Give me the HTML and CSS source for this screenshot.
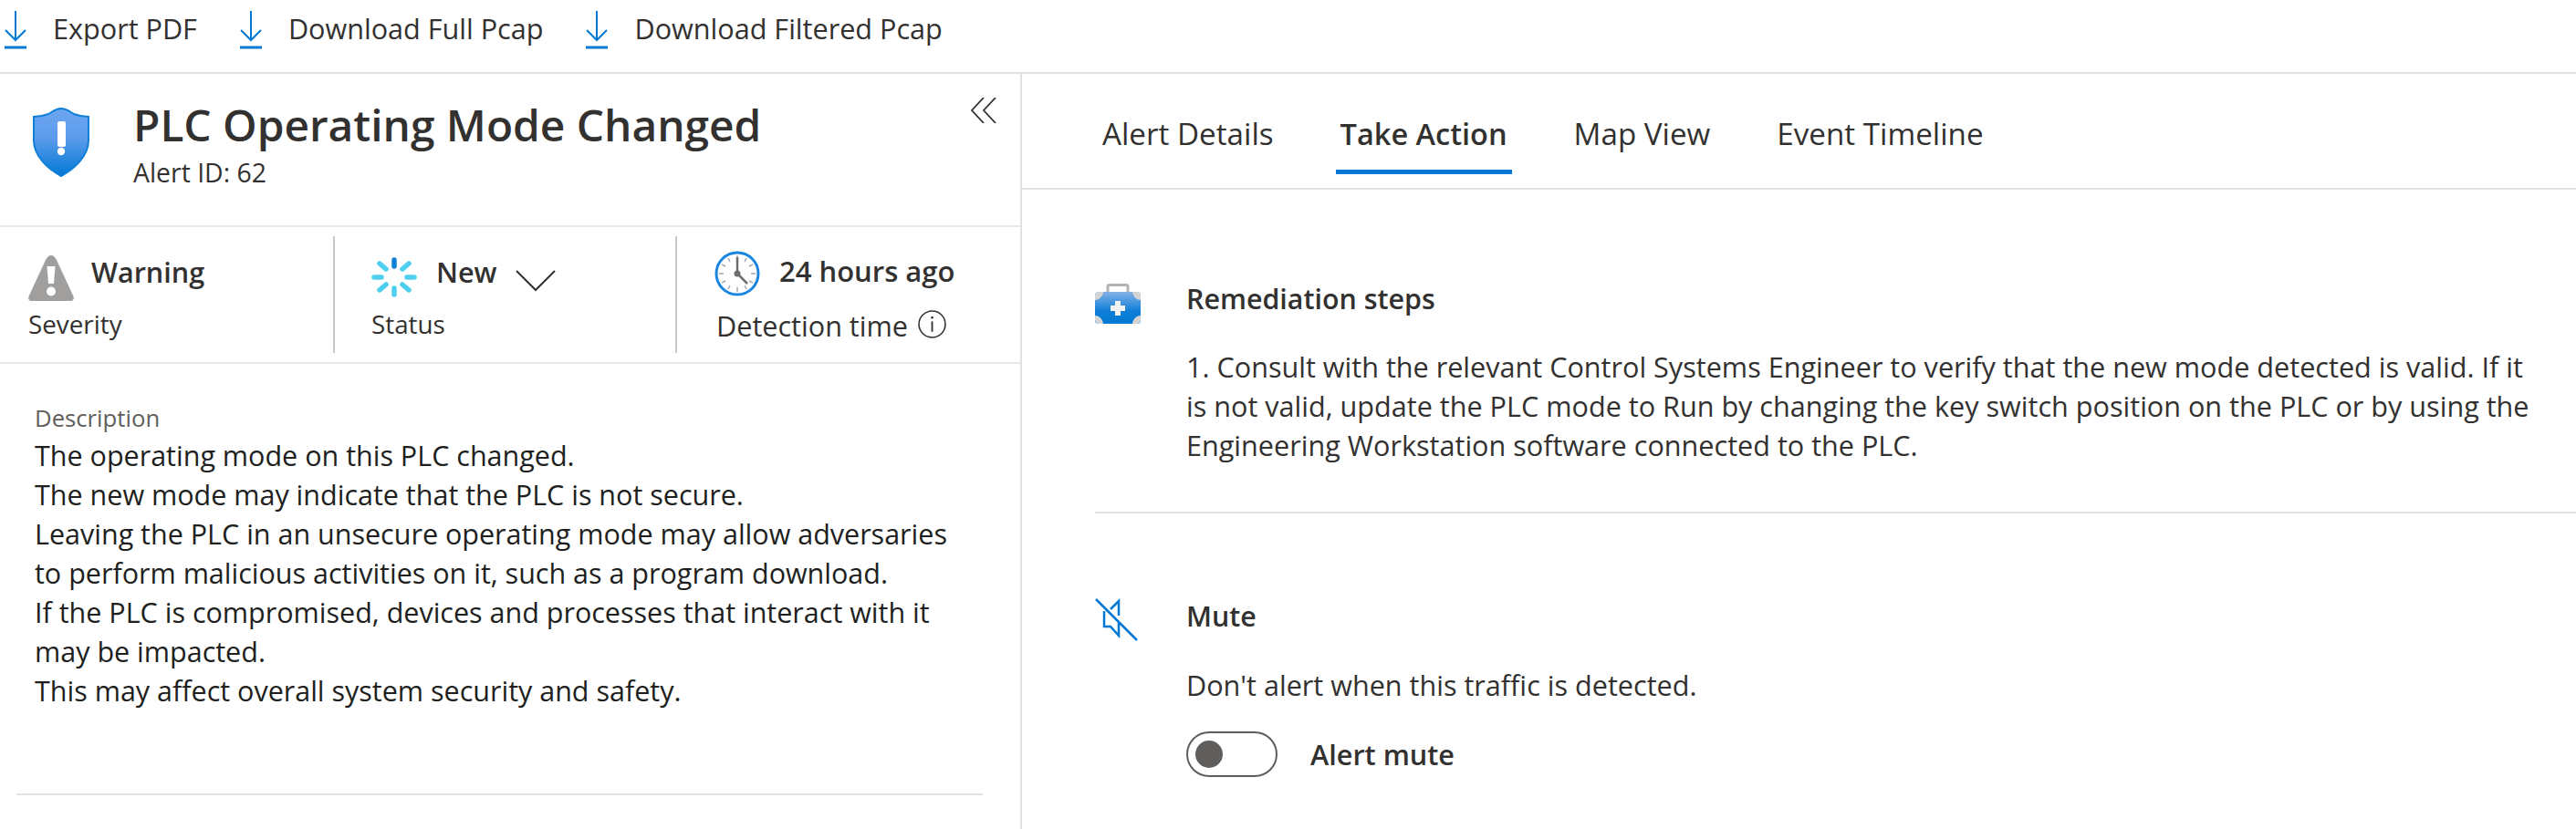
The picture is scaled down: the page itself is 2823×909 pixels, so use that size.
FILE: index.html
```html
<!DOCTYPE html>
<html lang="en">
<head>
<meta charset="utf-8">
<title>PLC Operating Mode Changed</title>
<link rel="stylesheet" href="styles.css">
</head>
<body>
<header class="toolbar">
  <a class="tool"><svg class="dl" viewBox="0 0 24 42"><path d="M12 0V32M1 21L12 32L23 21" /><path d="M0 40H24" class="thick"/></svg><span>Export PDF</span></a>
  <a class="tool"><svg class="dl" viewBox="0 0 24 42"><path d="M12 0V32M1 21L12 32L23 21" /><path d="M0 40H24" class="thick"/></svg><span>Download Full Pcap</span></a>
  <a class="tool"><svg class="dl" viewBox="0 0 24 42"><path d="M12 0V32M1 21L12 32L23 21" /><path d="M0 40H24" class="thick"/></svg><span>Download Filtered Pcap</span></a>
</header>
<main class="main">
  <section class="left">
    <div class="head">
      <svg class="shield" viewBox="0 0 62 76">
        <defs><linearGradient id="sg" x1="0" y1="0" x2="0" y2="1"><stop offset="0" stop-color="#6ea6f2"/><stop offset="0.45" stop-color="#5a9bea"/><stop offset="1" stop-color="#0078d4"/></linearGradient></defs>
        <path d="M31 1C25 1 21 5 17 7C12 9 7 10 1 10V36C1 54 18 68 31 75C44 68 61 54 61 36V10C55 10 50 9 45 7C41 5 37 1 31 1Z" fill="url(#sg)" stroke="#0f7fd8" stroke-width="2"/>
        <rect x="27" y="15" width="9" height="28" rx="2" fill="#fff"/><circle cx="31" cy="48" r="4.2" fill="#fff"/>
      </svg>
      <div class="head-text">
        <h1>PLC Operating Mode Changed</h1>
        <p>Alert ID: 62</p>
      </div>
      <svg class="collapse" viewBox="0 0 28 28"><path d="M14 0L1 14L14 28M27 0L14 14L27 28"/></svg>
    </div>
    <div class="stats">
      <div class="stat stat-a">
        <div class="stat-top">
          <svg class="warn" viewBox="0 0 50 50"><path d="M25 0C22 0 21 2 19 5L1 44C-1 48 1 50 4 50H46C49 50 51 48 49 44L31 5C29 2 28 0 25 0Z" fill="#a19f9d"/><path d="M20.500 12H29.500L28 31H22Z" fill="#fff"/><circle cx="25" cy="39.500" r="5" fill="#fff"/></svg>
          <strong>Warning</strong>
        </div>
        <div class="stat-label">Severity</div>
      </div>
      <div class="stat stat-b">
        <div class="stat-top">
          <svg class="spin" viewBox="0 0 50 44"><g stroke-width="5.500" stroke-linecap="round" stroke="#4fcff0"><path d="M25 3V10" stroke="#0f7fd8"/><path d="M34 13L41 7M34 30L41 36M9 7L16 13M9 36L16 30M3 22H11M39 22H47M25 34V41"/></g></svg>
          <strong>New</strong>
          <svg class="chev" viewBox="0 0 44 24"><path d="M1 1L22 22L43 1"/></svg>
        </div>
        <div class="stat-label">Status</div>
      </div>
      <div class="stat stat-c">
        <div class="stat-top">
          <svg class="clock" viewBox="0 0 50 50"><circle cx="25" cy="25" r="23" fill="#fff" stroke="#1a86e0" stroke-width="3"/><path d="M25 5V10M25 40V45M5 25H10M40 25H45M35 8L33 12M42 15L38 17M15 8L17 12M8 15L12 17M8 35L12 33M15 42L17 38M35 42L33 38M42 35L38 33" stroke="#a8a8a8" stroke-width="1.500"/><path d="M25 7V25L36 36" fill="none" stroke="#6e6e6e" stroke-width="2.500"/><circle cx="25" cy="25" r="3.500" fill="#6e6e6e"/></svg>
          <strong>24 hours ago</strong>
        </div>
        <div class="stat-label label-info">Detection time <svg class="info" viewBox="0 0 30 30"><circle cx="15" cy="15" r="14" fill="none" stroke="#323130" stroke-width="1.500"/><path d="M15 12V23" stroke="#323130" stroke-width="1.800"/><circle cx="15" cy="8" r="1.300" fill="#323130"/></svg></div>
      </div>
    </div>
    <div class="desc">
      <div class="desc-label">Description</div>
      <div class="desc-body">The operating mode on this PLC changed.<br>The new mode may indicate that the PLC is not secure.<br>Leaving the PLC in an unsecure operating mode may allow adversaries to perform malicious activities on it, such as a program download.<br>If the PLC is compromised, devices and processes that interact with it may be impacted.<br>This may affect overall system security and safety.</div>
    </div>
    <div class="left-rule"></div>
  </section>
  <section class="right">
    <nav class="tabs">
      <a class="tab">Alert Details</a>
      <a class="tab active">Take Action</a>
      <a class="tab">Map View</a>
      <a class="tab">Event Timeline</a>
    </nav>
    <div class="action action-rem">
      <svg class="kit" viewBox="0 0 50 44">
        <defs><linearGradient id="kg" x1="0" y1="0" x2="0" y2="1"><stop offset="0" stop-color="#84b1e6"/><stop offset="0.6" stop-color="#0f7fd8"/><stop offset="1" stop-color="#0078d4"/></linearGradient></defs>
        <path d="M14 9V3C14 2 15 1.500 16 1.500H34C35 1.500 36 2 36 3V9" fill="none" stroke="#b3b3b3" stroke-width="3"/>
        <rect y="9" width="50" height="35" rx="4" fill="url(#kg)"/>
        <path d="M0 13C0 11 2 9 4 9H9C9 13 5 18 0 18ZM50 13C50 11 48 9 46 9H41C41 13 45 18 50 18ZM0 40C0 42 2 44 4 44H9C9 40 5 35 0 35ZM50 40C50 42 48 44 46 44H41C41 40 45 35 50 35Z" fill="#d4d4d4"/>
        <path d="M22 19H28V24H33V30H28V35H22V30H17V24H22Z" fill="#f2f2f2"/>
      </svg>
      <div class="action-body">
        <h2>Remediation steps</h2>
        <p>1. Consult with the relevant Control Systems Engineer to verify that the new mode detected is valid. If it is not valid, update the PLC mode to Run by changing the key switch position on the PLC or by using the Engineering Workstation software connected to the PLC.</p>
      </div>
    </div>
    <div class="action action-mute">
      <svg class="mute" viewBox="0 0 47 47"><path d="M1 1L46 46M17 12L26 3V19M10 14V31H17L26 41V26"/></svg>
      <div class="action-body">
        <h2>Mute</h2>
        <p>Don't alert when this traffic is detected.</p>
        <div class="toggle-row"><span class="toggle"><span class="thumb"></span></span><span class="toggle-label">Alert mute</span></div>
      </div>
    </div>
  </section>
</main>
</body>
</html>
```

FILE: styles.css
```css
* { box-sizing: border-box; }
html, body { margin: 0; height: 909px; overflow: hidden; background: #fff; }
body { font-family: "Open Sans", "Noto Sans", sans-serif; color: #323130; font-size: 30.6px; }
h1, h2, p { margin: 0; }

.toolbar { height: 81px; display: flex; align-items: flex-start; gap: 47px; padding: 12px 0 0 5px; border-bottom: 2px solid #dde1e6; }
.tool { display: flex; align-items: flex-start; gap: 29px; font-size: 30.6px; line-height: 38px; color: #323130; }
.dl { width: 24px; height: 42px; fill: none; stroke: #0078d4; stroke-width: 2; flex: none; }
.dl .thick { stroke-width: 3; }

.main { display: flex; height: 828px; }
.left { width: 1120px; flex: none; border-right: 2px solid #e1e1e1; }
.head { height: 168px; display: flex; padding: 36px 25px 0 36px; border-bottom: 2px solid #e8e8e8; position: relative; }
.shield { width: 62px; height: 76px; flex: none; margin-top: 1px; }
.head-text { margin-left: 48px; }
h1 { font-size: 47.8px; font-weight: 600; line-height: 56px; margin-top: -8px; color: #323130; }
.head-text p { font-size: 28.4px; line-height: 36px; margin-top: 6px; }
.collapse { position: absolute; right: 26px; top: 26px; width: 28px; height: 28px; fill: none; stroke: #323130; stroke-width: 1.800; }

.stats { height: 150px; display: grid; grid-template-columns: 367px 375px 1fr; padding: 10px 0; border-bottom: 2px solid #e8e8e8; }
.stat { padding-left: 31px; border-right: 2px solid #c8c8c8; }
.stat-b { padding-left: 40px; }
.stat-c { padding-left: 41px; border-right: 0; }
.stat-top { height: 75px; display: flex; align-items: center; }
.stat-top strong { font-size: 30.6px; font-weight: 600; line-height: 40px; }
.warn { width: 50px; height: 50px; margin-right: 19px; margin-top: 16px; flex: none; }
.stat-a strong { margin-top: 3px; }
.spin { width: 50px; height: 44px; margin-right: 21px; margin-top: 14px; flex: none; }
.stat-b strong { margin-top: 3px; }
.chev { width: 44px; height: 24px; margin-left: 20px; margin-top: 22px; fill: none; stroke: #323130; stroke-width: 2; }
.clock { width: 50px; height: 50px; margin-right: 21px; margin-top: 6px; flex: none; }
.stat-c strong { font-size: 31px; margin-top: 1px; }
.stat-label { font-size: 27.8px; line-height: 36px; margin-top: 3px; }
.label-info { display: flex; align-items: center; gap: 11px; margin-left: 2px; font-size: 30.6px; margin-top: 5px; }
.info { width: 31px; height: 31px; margin-top: -4px; }

.desc { padding: 42px 60px 0 38px; height: 471px; }
.desc-label { font-size: 25.7px; line-height: 36px; color: #605e5c; }
.desc-body { font-size: 30.5px; line-height: 43px; color: #201f1e; margin-top: 1px; }
.left-rule { height: 2px; margin: 0 41px 0 18px; background: #e1e1e1; }

.right { flex: 1; min-width: 0; }
.tabs { height: 127px; display: flex; gap: 63px; padding: 0 0 0 83px; border-bottom: 2px solid #e1e1e1; }
.tab { height: 110px; padding: 46px 5px 0; font-size: 33.2px; line-height: 40px; color: #323130; border-bottom: 5px solid transparent; }
.tab.active { font-weight: 600; font-size: 32.5px; border-bottom-color: #0078d4; }

.action { display: flex; margin-left: 80px; }
.action-rem { padding-top: 103px; border-bottom: 2px solid #e1e1e1; height: 355px; }
.action-mute { padding-top: 93px; }
.action-body { padding-left: 50px; flex: 1; min-width: 0; }
.kit { width: 50px; height: 44px; flex: none; }
.mute { width: 47px; height: 47px; flex: none; fill: none; stroke: #0078d4; stroke-width: 2.500; margin-right: 3px; }
h2 { font-size: 30.4px; font-weight: 600; line-height: 40px; color: #323130; }
.action-rem h2 { margin-top: -3px; }
.action-body p { font-size: 30.6px; line-height: 43px; }
.action-rem p { margin-top: 33px; padding-right: 35px; }
.action-mute p { margin-top: 34px; }
.toggle-row { display: flex; align-items: center; margin-top: 29px; }
.toggle { width: 100px; height: 50px; border: 2px solid #605e5c; border-radius: 25px; padding: 8px; flex: none; }
.thumb { display: block; width: 30px; height: 30px; border-radius: 50%; background: #605e5c; }
.toggle-label { margin-left: 36px; font-size: 30.6px; font-weight: 600; }
```
